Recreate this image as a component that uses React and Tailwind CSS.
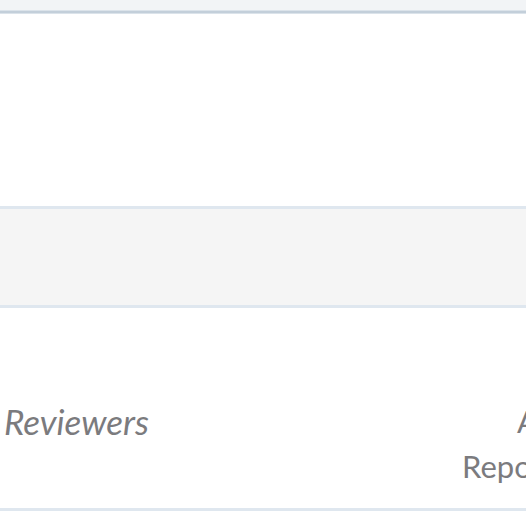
export default function App() {
  return (
    <div className="w-[526px] h-[526px] overflow-hidden bg-white flex flex-col" style={{ fontFamily: 'Lato, "Open Sans", sans-serif' }}>
      <div className="h-[10px] bg-[#f2f4f6] shrink-0" />
      <div className="h-[4px] shrink-0 bg-[#c3cfda] border-y border-[#dbe3ea]" />
      <div className="h-[192px] bg-white shrink-0" />
      <div className="h-[3px] bg-[#dfe7ef] shrink-0" />
      <div className="h-[96px] bg-[#f5f5f5] shrink-0" />
      <div className="h-[3px] bg-[#dfe7ef] shrink-0" />
      <div className="h-[200px] bg-white shrink-0 flex">
        <div className="pl-[4px] pt-[91px] text-[35px] italic leading-[44px] text-[#7b7b7e] whitespace-nowrap">Reviewers</div>
        <div className="ml-auto w-[64px] shrink-0 pt-[91px] text-[31px] leading-[45px] text-[#7b7b7e] whitespace-nowrap overflow-hidden">
          <div className="pl-[55px]">Abuse</div>
          <div>Reports</div>
        </div>
      </div>
      <div className="h-[3px] bg-[#dfe7ef] shrink-0" />
      <div className="flex-1 bg-white" />
    </div>
  );
}
